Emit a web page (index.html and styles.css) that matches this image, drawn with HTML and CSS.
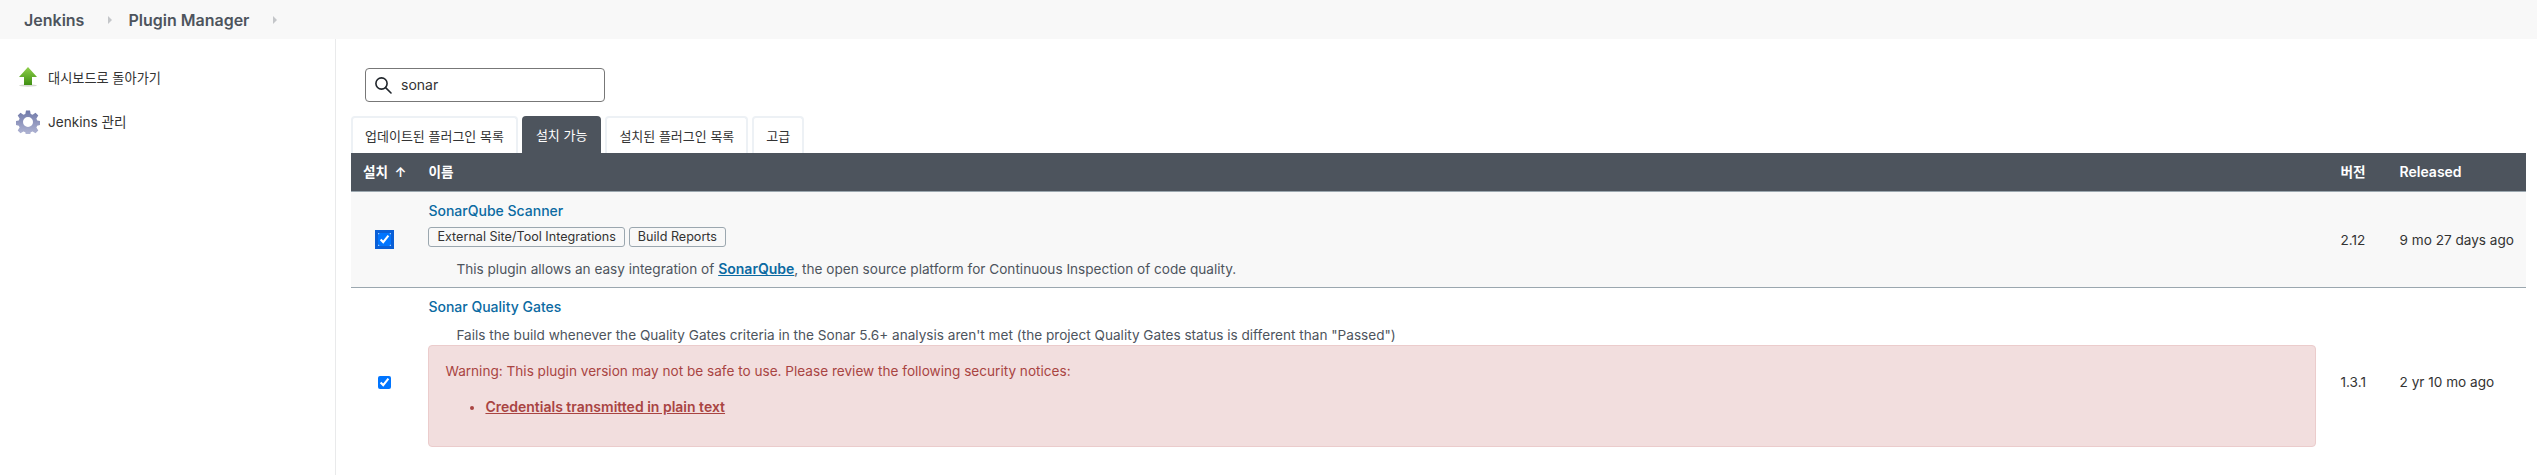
FILE: index.html
```html
<!DOCTYPE html>
<html lang="ko">
<head>
    <meta charset="UTF-8">
    <title>Plugin Manager</title>
    <link rel="stylesheet" href="styles.css">
</head>
<body>
    <div class="breadcrumbs">
        <a class="crumb" href="#">Jenkins</a>
        <svg class="chevron" width="4" height="8" viewBox="0 0 4 8"><path d="M0 0l4 4-4 4z"/></svg>
        <a class="crumb" href="#">Plugin Manager</a>
        <svg class="chevron" width="4" height="8" viewBox="0 0 4 8"><path d="M0 0l4 4-4 4z"/></svg>
    </div>
    <div class="page">
        <div class="sidebar">
            <a class="task task-back" href="#">
                <svg class="task-icon" width="24" height="24" viewBox="0 0 24 24">
                    <defs>
                        <linearGradient id="arrowFill" x1="0" y1="0" x2="0" y2="1">
                            <stop offset="0" stop-color="#8fd04a"/>
                            <stop offset="1" stop-color="#3f8f12"/>
                        </linearGradient>
                    </defs>
                    <ellipse cx="12" cy="19.5" rx="9" ry="1.2" fill="#d5d8d0"/>
                    <path d="M12 1L21 11h-5v8H8v-8H3z" fill="url(#arrowFill)"/>
                </svg>
                <span>대시보드로 돌아가기</span>
            </a>
            <a class="task" href="#">
                <svg class="task-icon" width="24" height="24" viewBox="0 0 24 24">
                    <defs>
                        <linearGradient id="gearFill" x1="0" y1="0" x2="0" y2="1">
                            <stop offset="0" stop-color="#6f78a8"/>
                            <stop offset="1" stop-color="#b4b8d6"/>
                        </linearGradient>
                    </defs>
                    <path fill="url(#gearFill)" fill-rule="evenodd" d="M10 0.5h4l.7 3.4 1.9.8 2.9-1.9 2.8 2.8-1.9 2.9.8 1.9 3.3.6v4l-3.3.7-.8 1.9 1.9 2.9-2.8 2.8-2.9-1.9-1.9.8-.7 3.3h-4l-.7-3.3-1.9-.8-2.9 1.9-2.8-2.8 1.9-2.9-.8-1.9-3.3-.7v-4l3.3-.6.8-1.9-1.9-2.9 2.8-2.8 2.9 1.9 1.9-.8zM12 7a5 5 0 1 0 0 10 5 5 0 0 0 0-10z"/>
                </svg>
                <span>Jenkins 관리</span>
            </a>
        </div>
        <div class="main">
            <div class="search">
                <svg width="18" height="18" viewBox="0 0 18 18" fill="none" stroke="#20252b" stroke-width="1.6"><circle cx="7.5" cy="7.5" r="5.6"/><path d="M11.6 11.6L17 17" stroke-linecap="round"/></svg>
                <input class="search-input" type="text" value="sonar">
            </div>
            <div class="tabs">
                <a class="tab" href="#">업데이트된 플러그인 목록</a>
                <a class="tab active" href="#">설치 가능</a>
                <a class="tab" href="#">설치된 플러그인 목록</a>
                <a class="tab" href="#">고급</a>
            </div>
            <table class="plugins">
                <thead>
                    <tr>
                        <th class="col-install">설치 <span class="sort">↑</span></th>
                        <th class="col-name">이름</th>
                        <th class="col-version">버전</th>
                        <th class="col-released">Released</th>
                    </tr>
                </thead>
                <tbody>
                    <tr class="first">
                        <td class="col-install"><input class="check focused" type="checkbox" checked></td>
                        <td class="col-name">
                            <a class="plugin-name" href="#">SonarQube Scanner</a>
                            <div class="labels">
                                <span class="label">External Site/Tool Integrations</span>
                                <span class="label">Build Reports</span>
                            </div>
                            <div class="excerpt">This plugin allows an easy integration of <a href="#">SonarQube</a>, the open source platform for Continuous Inspection of code quality.</div>
                        </td>
                        <td class="col-version">2.12</td>
                        <td class="col-released">9 mo 27 days ago</td>
                    </tr>
                    <tr>
                        <td class="col-install"><input class="check" type="checkbox" checked></td>
                        <td class="col-name">
                            <a class="plugin-name" href="#">Sonar Quality Gates</a>
                            <div class="excerpt second">Fails the build whenever the Quality Gates criteria in the Sonar 5.6+ analysis aren't met (the project Quality Gates status is different than "Passed")</div>
                            <div class="warning">
                                Warning: This plugin version may not be safe to use. Please review the following security notices:
                                <ul>
                                    <li><a href="#">Credentials transmitted in plain text</a></li>
                                </ul>
                            </div>
                        </td>
                        <td class="col-version">1.3.1</td>
                        <td class="col-released">2 yr 10 mo ago</td>
                    </tr>
                </tbody>
            </table>
        </div>
    </div>
</body>
</html>
```

FILE: styles.css
```css
html, body {
    height: 100%;
}

body {
    margin: 0;
    font-family: Inter, "Noto Sans CJK KR", sans-serif;
    font-size: 13.6px;
    line-height: 18px;
    color: #333;
    background-color: #fff;
    display: flex;
    flex-direction: column;
    overflow: hidden;
}

a {
    text-decoration: none;
}

.breadcrumbs {
    height: 39px;
    background-color: #f8f8f8;
    display: flex;
    align-items: center;
    padding-left: 24px;
    flex-shrink: 0;
}

.crumb {
    font-size: 16px;
    font-weight: 600;
    color: #4d545d;
}

.chevron {
    fill: #c4c6c9;
    margin: 0 16px 0 24px;
}

.page {
    display: flex;
    flex: 1;
    min-height: 0;
}

.sidebar {
    width: 335px;
    border-right: 1px solid #e9eaeb;
    padding-top: 17px;
    flex-shrink: 0;
}

.task {
    display: flex;
    align-items: center;
    gap: 8px;
    height: 44px;
    padding-left: 16px;
    color: #333;
}

.task-back {
    font-size: 13.2px;
}

.task-icon {
    flex-shrink: 0;
}

.main {
    flex: 1;
    padding: 29px 11px 0 15px;
}

.search {
    width: 240px;
    height: 34px;
    margin-left: 14px;
    box-sizing: border-box;
    border: 1px solid #777;
    border-radius: 4px;
    display: flex;
    align-items: center;
    padding-left: 8px;
    gap: 9px;
}

.search-input {
    border: none;
    outline: none;
    background: none;
    font: inherit;
    font-size: 14px;
    color: #333;
    width: 180px;
    padding: 0;
}

.tabs {
    display: flex;
    gap: 4px;
    margin-top: 14px;
    height: 37px;
}

.tab {
    box-sizing: border-box;
    padding: 0 12px;
    border: 2px solid #edf1f5;
    border-bottom: none;
    border-radius: 4px 4px 0 0;
    color: #333;
    font-size: 13px;
    display: flex;
    align-items: center;
}

.tab.active {
    padding: 0 14px;
    border: none;
    background-color: #4d545d;
    color: #fff;
}

.plugins {
    width: 100%;
    border-collapse: separate;
    border-spacing: 0;
}

.plugins th {
    height: 38px;
    padding: 0 12px;
    background-color: #4d545d;
    border-bottom: 1px solid #9ba7af;
    color: #fff;
    font-weight: 600;
    text-align: left;
    white-space: nowrap;
}

.sort {
    margin-left: 3px;
}

.plugins td {
    padding: 9px 12px;
    vertical-align: middle;
}

.plugins .first td {
    background-color: #f8f8f8;
    border-bottom: 1px solid #9ba7af;
}

.plugins .col-install {
    width: 43px;
    padding-right: 22px;
}

.plugins .col-name {
    padding-left: 0;
}

.plugins .col-version {
    width: 35px;
    padding-left: 13px;
}

.plugins .col-released {
    width: 114px;
    white-space: nowrap;
}

.plugins th.col-released {
    font-size: 14px;
}

.check {
    display: block;
    margin: 0 auto;
    width: 13px;
    height: 13px;
}

.check.focused {
    outline: 3px solid #0a5fd6;
    outline-offset: 0;
    border-radius: 2px;
}

.plugin-name {
    display: block;
    color: #0b6aa2;
    font-size: 14px;
    font-weight: 500;
    margin-top: 1px;
}

.labels {
    display: flex;
    gap: 4px;
    margin-top: 7px;
}

.label {
    height: 20px;
    box-sizing: border-box;
    border: 1px solid #9ba7af;
    border-radius: 3px;
    padding: 0 8px;
    font-size: 12.6px;
    line-height: 18px;
    color: #333;
}

.excerpt {
    margin-top: 13px;
    padding-left: 28px;
    color: #4d545d;
}

.excerpt.second {
    margin-top: 10px;
}

.excerpt a {
    color: #0b6aa2;
    font-size: 14px;
    font-weight: 600;
    text-decoration: underline;
}

.warning {
    margin: 1px 0 20px;
    height: 102px;
    box-sizing: border-box;
    padding: 16px;
    background-color: #f2dede;
    border: 1px solid #ebcccc;
    border-radius: 4px;
    color: #a94442;
}

.warning ul {
    margin: 18px 0 0;
    padding-left: 40px;
}

.warning a {
    color: #a94442;
    font-size: 14px;
    font-weight: 600;
    text-decoration: underline;
}
```
